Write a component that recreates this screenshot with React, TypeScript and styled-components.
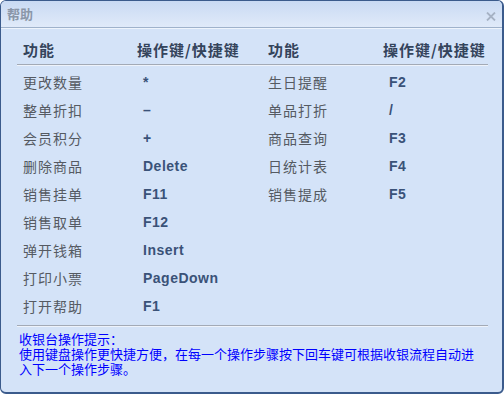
import React from "react";
import styled, { createGlobalStyle } from "styled-components";

const GlobalStyle = createGlobalStyle`
  html, body { margin: 0; padding: 0; background: #ffffff; }
  #root { width: 504px; height: 394px; }
`;

const Window = styled.div`
  box-sizing: border-box;
  width: 504px;
  height: 394px;
  border: 1px solid #3b5b8c;
  border-right-width: 2px;
  border-bottom-width: 2px;
  border-radius: 6px;
  background: #d4e3f8;
  overflow: hidden;
  display: flex;
  flex-direction: column;
  font-family: "Noto Sans CJK SC", "Liberation Sans", sans-serif;
`;

const TitleBar = styled.div`
  height: 26px;
  flex: none;
  display: flex;
  align-items: center;
  justify-content: space-between;
  padding: 0 6px 0 6px;
  background: linear-gradient(#c9daf3, #e0eaf9);
  border-bottom: 1px solid #9fb2cb;
  box-shadow: 0 1px 0 #eef4fc;
`;

const Title = styled.span`
  font-size: 13px;
  font-weight: bold;
  color: #8a96a8;
  line-height: 26px;
`;

const Close = styled.svg`
  width: 10px;
  height: 9px;
  margin-top: 4px;
`;

const Content = styled.div`
  flex: 1;
  padding: 0 14px 0 16px;
  display: flex;
  flex-direction: column;
  margin-top: 1px;
`;

const Row = styled.div<{ $head?: boolean }>`
  display: grid;
  grid-template-columns: 114px 131px 115px 1fr;
  padding-left: 6px;
  align-items: center;
  height: ${(p) => (p.$head ? "20px" : "28px")};
  ${(p) =>
    p.$head
      ? `padding-top: 11px; padding-bottom: 4px; border-bottom: 1px solid #a3aab6; box-shadow: 0 1px 0 #eef3fb; margin-bottom: 3px;`
      : ``}
`;

const HeadCell = styled.span`
  font-size: 15px;
  font-weight: bold;
  letter-spacing: 1px;
  color: #34445c;
  line-height: 20px;
  white-space: nowrap;
`;

const Label = styled.span`
  font-size: 14px;
  letter-spacing: 1px;
  color: #555a62;
  line-height: 20px;
  white-space: nowrap;
`;

const Key = styled.span`
  font-family: "Liberation Sans", Arial, sans-serif;
  font-size: 14px;
  font-weight: bold;
  letter-spacing: 0.5px;
  color: #3a5278;
  padding-left: 6px;
  line-height: 20px;
  white-space: nowrap;
`;

const Rows = styled.div`
  display: flex;
  flex-direction: column;
  border-bottom: 1px solid #a3aab6;
  box-shadow: 0 1px 0 #eef3fb;
  padding-bottom: 5px;
`;

const Tip = styled.div`
  padding: 5px 8px 0 2px;
  font-size: 13px;
  line-height: 15px;
  color: #0000ff;
`;

const data: [string, string, string?, string?][] = [
  ["更改数量", "*", "生日提醒", "F2"],
  ["整单折扣", "–", "单品打折", "/"],
  ["会员积分", "+", "商品查询", "F3"],
  ["删除商品", "Delete", "日统计表", "F4"],
  ["销售挂单", "F11", "销售提成", "F5"],
  ["销售取单", "F12"],
  ["弹开钱箱", "Insert"],
  ["打印小票", "PageDown"],
  ["打开帮助", "F1"],
];

export default function App() {
  return (
    <>
      <GlobalStyle />
      <Window>
        <TitleBar>
          <Title>帮助</Title>
          <Close viewBox="0 0 10 9">
            <path d="M1 0.5 L9 8.5 M9 0.5 L1 8.5" stroke="#a6b2c4" strokeWidth="1.8" fill="none" />
          </Close>
        </TitleBar>
        <Content>
          <Row $head>
            <HeadCell>功能</HeadCell>
            <HeadCell>操作键/快捷键</HeadCell>
            <HeadCell>功能</HeadCell>
            <HeadCell>操作键/快捷键</HeadCell>
          </Row>
          <Rows>
            {data.map(([a, b, c, d]) => (
              <Row key={a}>
                <Label>{a}</Label>
                <Key>{b}</Key>
                <Label>{c ?? ""}</Label>
                <Key>{d ?? ""}</Key>
              </Row>
            ))}
          </Rows>
          <Tip>
            收银台操作提示：
            <br />
            使用键盘操作更快捷方便，在每一个操作步骤按下回车键可根据收银流程自动进入下一个操作步骤。
          </Tip>
        </Content>
      </Window>
    </>
  );
}
